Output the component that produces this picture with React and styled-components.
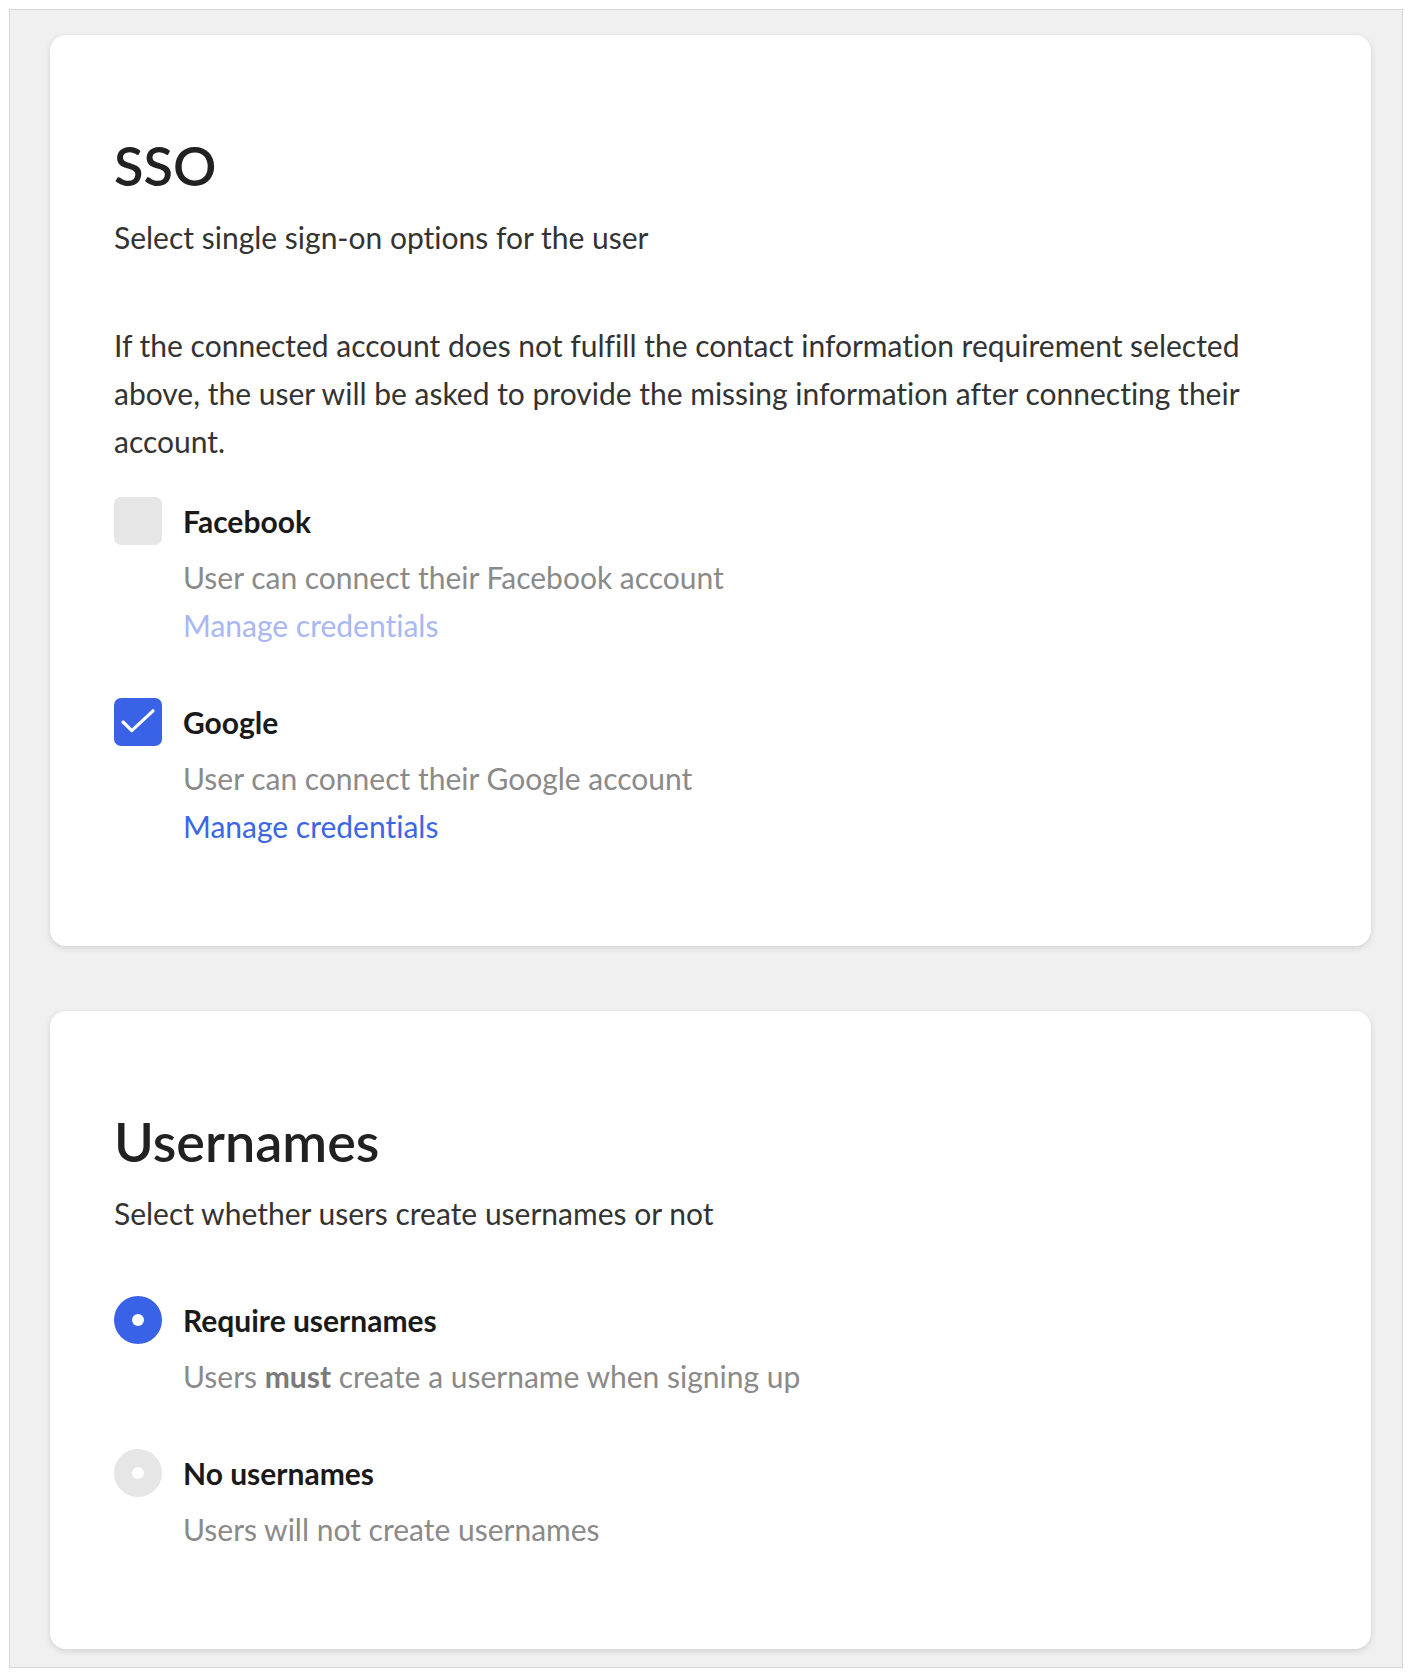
import React from "react";
import styled, { createGlobalStyle } from "styled-components";

const GlobalStyle = createGlobalStyle`
  body {
    margin: 0;
    background: #ffffff;
    font-family: "Lato", "Liberation Sans", sans-serif;
    font-variant-ligatures: none;
  }
`;

const Frame = styled.div`
  margin: 9px 9px 9px 9px;
  border: 1px solid #d6d6d6;
  background: #f0f0f0;
  padding: 25px 31px 18px 40px;
  display: flex;
  flex-direction: column;
  gap: 65px;
`;

const Card = styled.section`
  background: #ffffff;
  border-radius: 16px;
  box-shadow: 0 2px 6px rgba(0, 0, 0, 0.13);
  padding: 100px 64px 96px;
`;

const Title = styled.h2`
  margin: 0;
  font-size: 54px;
  line-height: 62px;
  font-weight: 600;
  color: #212121;
`;

const Subtitle = styled.p`
  margin: 16px 0 0;
  font-size: 30px;
  line-height: 48px;
  color: #333333;
`;

const Paragraph = styled.p`
  margin: 60px 0 0;
  font-size: 30px;
  line-height: 48px;
  color: #333333;
`;

const Options = styled.div`
  margin-top: ${(p) => p.$top}px;
  display: flex;
  flex-direction: column;
  gap: 49px;
`;

const Option = styled.div`
  display: grid;
  grid-template-columns: 48px 1fr;
  column-gap: 21px;
`;

const Box = styled.div`
  width: 48px;
  height: 48px;
  border-radius: 7px;
  background: ${(p) => (p.$checked ? "#3a62e6" : "#e6e6e6")};
  display: flex;
  align-items: center;
  justify-content: center;
`;

const Radio = styled.div`
  width: 48px;
  height: 48px;
  border-radius: 50%;
  background: ${(p) => (p.$checked ? "#3a62e6" : "#e6e6e6")};
  display: flex;
  align-items: center;
  justify-content: center;

  &::after {
    content: "";
    width: 12px;
    height: 12px;
    border-radius: 50%;
    background: #ffffff;
  }
`;

const Body = styled.div`
  display: flex;
  flex-direction: column;
`;

const Label = styled.div`
  font-size: 30px;
  line-height: 48px;
  font-weight: 700;
  color: #1a1a1a;
`;

const Desc = styled.div`
  margin-top: 8px;
  font-size: 30px;
  line-height: 48px;
  color: #8a8a8a;

  b {
    font-weight: 700;
    color: #7a7a7a;
  }
`;

const Link = styled.a`
  align-self: flex-start;
  font-size: 30px;
  line-height: 48px;
  color: ${(p) => (p.$disabled ? "#a8b7f6" : "#3b66e6")};
  text-decoration: none;
  cursor: pointer;
`;

const Check = () => (
  <svg width="48" height="48" viewBox="0 0 48 48" fill="none">
    <path
      d="M9 24 L17.8 32.6 L39 12.8"
      stroke="#ffffff"
      strokeWidth="3.2"
      strokeLinecap="round"
      strokeLinejoin="round"
    />
  </svg>
);

const providers = [
  { name: "Facebook", checked: false },
  { name: "Google", checked: true },
];

const App = () => {
  return (
    <>
      <GlobalStyle />
      <Frame>
        <Card>
          <Title>SSO</Title>
          <Subtitle>Select single sign-on options for the user</Subtitle>
          <Paragraph>
            If the connected account does not fulfill the contact information
            requirement selected above, the user will be asked to provide the
            missing information after connecting their account.
          </Paragraph>
          <Options $top={32}>
            {providers.map((p) => (
              <Option key={p.name}>
                <Box $checked={p.checked}>{p.checked && <Check />}</Box>
                <Body>
                  <Label>{p.name}</Label>
                  <Desc>User can connect their {p.name} account</Desc>
                  <Link $disabled={!p.checked}>Manage credentials</Link>
                </Body>
              </Option>
            ))}
          </Options>
        </Card>
        <Card>
          <Title>Usernames</Title>
          <Subtitle>Select whether users create usernames or not</Subtitle>
          <Options $top={59}>
            <Option>
              <Radio $checked />
              <Body>
                <Label>Require usernames</Label>
                <Desc>
                  Users <b>must</b> create a username when signing up
                </Desc>
              </Body>
            </Option>
            <Option>
              <Radio />
              <Body>
                <Label>No usernames</Label>
                <Desc>Users will not create usernames</Desc>
              </Body>
            </Option>
          </Options>
        </Card>
      </Frame>
    </>
  );
};

export default App;
